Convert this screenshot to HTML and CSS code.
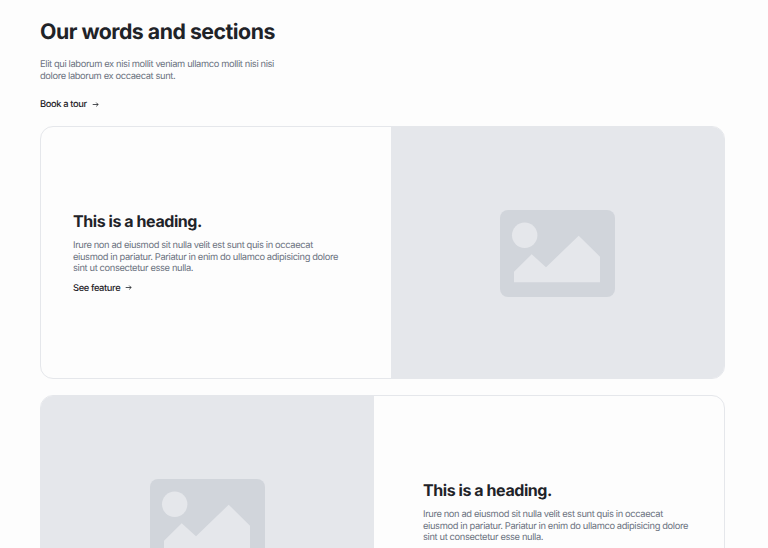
FILE: index.html
```html
<!DOCTYPE html>
<html lang="en">
<head>
    <meta charset="UTF-8">
    <meta name="viewport" content="width=device-width, initial-scale=1.0">
    <title>Our words and sections</title>
    <link rel="stylesheet" href="styles.css">
</head>
<body>
    <div class="page">
        <div class="intro">
            <h1>Our words and sections</h1>
            <p>Elit qui laborum ex nisi mollit veniam ullamco mollit nisi nisi dolore laborum ex occaecat sunt.</p>
            <a class="link" href="#">Book a tour
                <svg class="arrow" viewBox="0 0 8 8"><path d="M0.8 4H7M4.8 1.8L7 4L4.8 6.2"/></svg>
            </a>
        </div>

        <div class="card">
            <div class="card-text">
                <h2>This is a heading.</h2>
                <p>Irure non ad eiusmod sit nulla velit est sunt quis in occaecat eiusmod in pariatur. Pariatur in enim do ullamco adipisicing dolore sint ut consectetur esse nulla.</p>
                <a class="link" href="#">See feature
                    <svg class="arrow" viewBox="0 0 8 8"><path d="M0.8 4H7M4.8 1.8L7 4L4.8 6.2"/></svg>
                </a>
            </div>
            <div class="card-image">
                <svg class="placeholder" viewBox="0 0 115 87">
                    <rect width="115" height="87" rx="8" fill="#d1d5db"/>
                    <circle cx="24.7" cy="25.3" r="12.7" fill="#e5e7eb"/>
                    <path d="M14 72.3V61.7L31.7 44.3L46 57.3L78.7 25.7L100 46.7V72.3Z" fill="#e5e7eb"/>
                </svg>
            </div>
        </div>

        <div class="card card-flipped">
            <div class="card-image">
                <svg class="placeholder" viewBox="0 0 115 87">
                    <rect width="115" height="87" rx="8" fill="#d1d5db"/>
                    <circle cx="24.7" cy="25.3" r="12.7" fill="#e5e7eb"/>
                    <path d="M14 72.3V61.7L31.7 44.3L46 57.3L78.7 25.7L100 46.7V72.3Z" fill="#e5e7eb"/>
                </svg>
            </div>
            <div class="card-text">
                <h2>This is a heading.</h2>
                <p>Irure non ad eiusmod sit nulla velit est sunt quis in occaecat eiusmod in pariatur. Pariatur in enim do ullamco adipisicing dolore sint ut consectetur esse nulla.</p>
                <a class="link" href="#">See feature
                    <svg class="arrow" viewBox="0 0 8 8"><path d="M0.8 4H7M4.8 1.8L7 4L4.8 6.2"/></svg>
                </a>
            </div>
        </div>
    </div>
</body>
</html>
```

FILE: styles.css
```css
html {
    background: #fdfdfd;
}
body {
    margin: 0;
    font-family: Inter, "Liberation Sans", sans-serif;
    color: #1f2328;
    text-rendering: geometricPrecision;
}
.page {
    padding: 16px 43px 32px 40px;
}
.intro {
    margin-bottom: 15px;
}
h1 {
    margin: 0 0 11px;
    font-size: 21.3px;
    line-height: 32px;
    font-weight: 700;
    letter-spacing: -0.5px;
}
.intro p {
    margin: 0 0 9px;
    width: 240px;
    font-size: 9.33px;
    line-height: 11.5px;
    letter-spacing: -0.37px;
    color: #6b7280;
}
.link {
    display: inline-flex;
    align-items: center;
    gap: 5px;
    font-size: 9.33px;
    line-height: 12px;
    font-weight: 500;
    letter-spacing: -0.37px;
    color: #1f2328;
    text-decoration: none;
}
.arrow {
    width: 7px;
    height: 7px;
    margin-top: -2px;
    fill: none;
    stroke: #1f2328;
    stroke-width: 0.9;
}
.card {
    display: flex;
    height: 251px;
    margin-bottom: 16px;
    border: 1px solid #e5e7eb;
    border-radius: 13px;
    overflow: hidden;
}
.card-text {
    flex: 1;
    display: flex;
    flex-direction: column;
    justify-content: center;
    align-items: flex-start;
    padding: 1px 32px 0;
}
.card-flipped .card-text {
    padding: 1px 32px 0 49px;
}
.card-text h2 {
    margin: 0 0 8px;
    font-size: 16px;
    line-height: 21px;
    font-weight: 700;
    letter-spacing: -0.43px;
}
.card-text p {
    margin: 0 0 8px;
    max-width: 268px;
    font-size: 9.33px;
    line-height: 11.5px;
    letter-spacing: -0.37px;
    color: #6b7280;
}
.card-image {
    flex: none;
    width: 333px;
    display: flex;
    align-items: center;
    justify-content: center;
    background: #e5e7eb;
}
.placeholder {
    width: 115px;
    height: 87px;
    margin-top: 1px;
}
```
